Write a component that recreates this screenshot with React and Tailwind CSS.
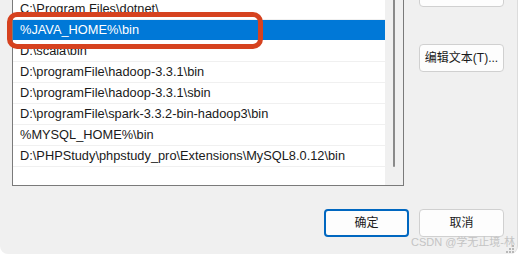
import React from 'react';

const paths = [
  'C:\\Program Files\\dotnet\\',
  '%JAVA_HOME%\\bin',
  'D:\\scala\\bin',
  'D:\\programFile\\hadoop-3.3.1\\bin',
  'D:\\programFile\\hadoop-3.3.1\\sbin',
  'D:\\programFile\\spark-3.3.2-bin-hadoop3\\bin',
  '%MYSQL_HOME%\\bin',
  'D:\\PHPStudy\\phpstudy_pro\\Extensions\\MySQL8.0.12\\bin',
];

const font = { fontFamily: '"Liberation Sans", "Noto Sans CJK SC", sans-serif' };

const Button = ({ children, primary, className = '' }) => (
  <div
    className={`flex items-center justify-center w-[85px] h-[28px] rounded-[4px] bg-[#fdfdfd] text-[12px] text-[#1a1a1a] ${
      primary ? 'border-2 border-[#0067c0]' : 'border border-[#d0d0d0]'
    } ${className}`}
  >
    {children}
  </div>
);

const App = () => {
  return (
    <div className="w-[521px] h-[254px] bg-white overflow-hidden" style={font}>
      <div className="relative w-[518px] h-[254px] bg-[#f0f0f0] rounded-b-[8px] border-r border-[#dcdcdc]">
        <div className="flex pl-[12px]">
          {/* path list */}
          <div className="flex w-[392px] h-[187px] mt-[-1px] bg-white border-x border-b border-[#7a7a7a]">
            <div className="w-[372px] flex flex-col">
              {paths.map((p, i) => (
                <div
                  key={p}
                  className={`h-[21px] flex items-center pl-[7px] text-[12.8px] border-b ${
                    i === 1
                      ? 'bg-[#0078d7] text-white border-white'
                      : 'text-[#1a1a1a] border-[#f0f0f0]'
                  }`}
                >
                  {p}
                </div>
              ))}
            </div>
            {/* collapsed scrollbar */}
            <div className="flex-1 bg-[#f0f0f0] flex justify-center">
              <div className="w-[2px] h-[168px] ml-[-1px] rounded-b-full bg-[#8a8a8a]" />
            </div>
          </div>

          {/* side buttons */}
          <div className="ml-[15px] flex flex-col gap-[37px] mt-[-21px]">
            <Button />
            <Button>编辑文本(T)...</Button>
          </div>
        </div>

        {/* dialog buttons */}
        <div className="flex gap-[10px] mt-[23px] ml-[324px]">
          <Button primary>确定</Button>
          <Button>取消</Button>
        </div>

        {/* highlight ring */}
        <div className="absolute left-[7px] top-[12px] w-[256px] h-[37px] border-[5px] border-[#d6421f] rounded-[10px]" />

        {/* watermark */}
        <div className="absolute right-[2px] top-[237px] text-[11px] text-[#c4c4c4] leading-none">
          CSDN @学无止境-林
        </div>

        {/* resize grip */}
        <svg className="absolute right-[3px] bottom-[1px]" width="8" height="8" viewBox="0 0 8 8">
          <rect x="6" y="0" width="2" height="2" fill="#b8b8b8" />
          <rect x="3" y="3" width="2" height="2" fill="#b8b8b8" />
          <rect x="6" y="3" width="2" height="2" fill="#b8b8b8" />
          <rect x="0" y="6" width="2" height="2" fill="#b8b8b8" />
          <rect x="3" y="6" width="2" height="2" fill="#b8b8b8" />
          <rect x="6" y="6" width="2" height="2" fill="#b8b8b8" />
        </svg>
      </div>
    </div>
  );
};

export default App;
